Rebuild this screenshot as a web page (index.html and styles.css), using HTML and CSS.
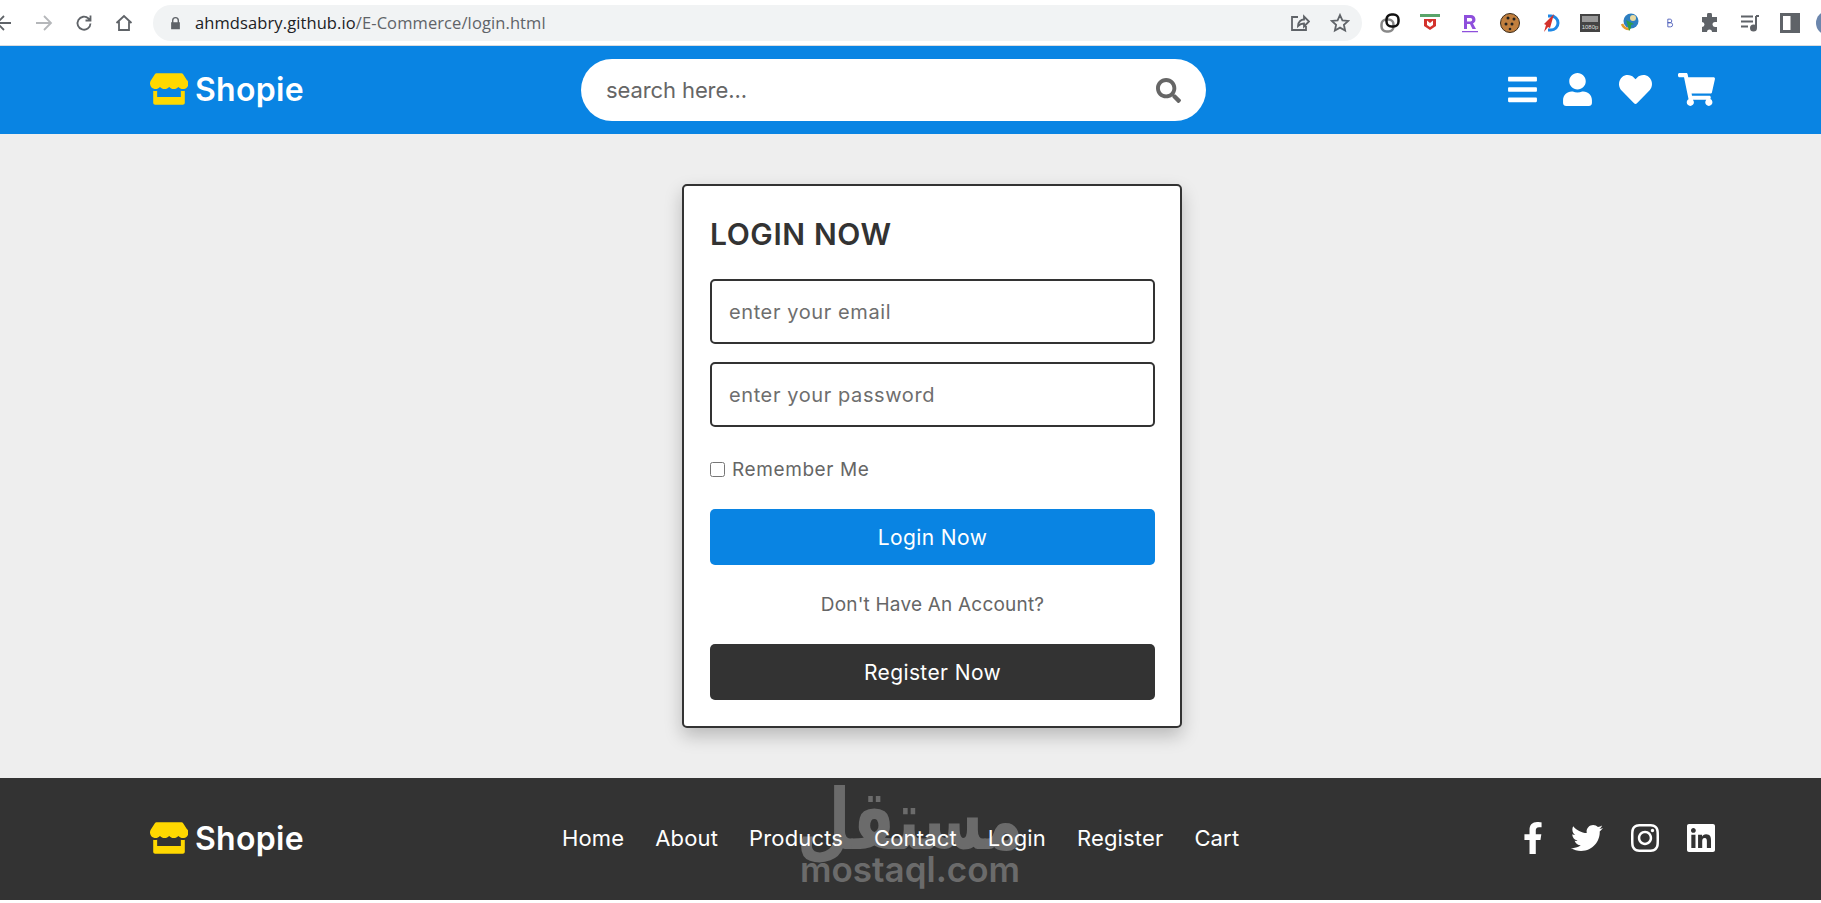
FILE: index.html
```html
<!DOCTYPE html>
<html lang="en">
<head>
  <meta charset="UTF-8">
  <meta name="viewport" content="width=device-width, initial-scale=1.0">
  <title>Login - Shopie</title>
  <link rel="stylesheet" href="styles.css">
</head>
<body>
  <svg class="defs" width="0" height="0" aria-hidden="true">
    <symbol id="store" viewBox="0 0 616 512"><path d="M602 118.6L537.1 15C531.3 5.7 521 0 510 0H106C95 0 84.7 5.7 78.9 15L14 118.6c-33.9 54.1-3.9 129.3 59.4 137.9 4.6.6 9.2.9 13.7.9 29.9 0 56.4-13.1 74.6-33.4 18.2 20.3 44.8 33.4 74.6 33.4 29.9 0 56.4-13.1 74.6-33.4 18.2 20.3 44.8 33.4 74.6 33.4 29.9 0 56.4-13.1 74.6-33.4 18.3 20.3 44.8 33.4 74.6 33.4 4.6 0 9.1-.3 13.7-.9 63.5-8.5 93.6-83.7 59.6-137.9zM529.5 288c-10 0-19.9-1.5-29.5-3.8V384H116v-99.8c-9.6 2.2-19.5 3.8-29.5 3.8-6 0-12.1-.4-18-1.2-5.6-.8-11.1-2.1-16.4-3.6V480c0 17.7 14.3 32 32 32h448c17.7 0 32-14.3 32-32V283.2c-5.4 1.6-10.8 2.9-16.4 3.6-6.1.8-12.1 1.2-18.2 1.2z"/></symbol>
    <symbol id="search" viewBox="0 0 512 512"><path d="M505 442.7L405.3 343c-4.5-4.5-10.6-7-17-7H372c27.6-35.3 44-79.7 44-128C416 93.1 322.9 0 208 0S0 93.1 0 208s93.1 208 208 208c48.3 0 92.7-16.4 128-44v16.3c0 6.4 2.5 12.5 7 17l99.7 99.7c9.4 9.4 24.6 9.4 33.9 0l28.3-28.3c9.4-9.4 9.4-24.6.1-34zM208 336c-70.7 0-128-57.2-128-128 0-70.7 57.2-128 128-128 70.7 0 128 57.2 128 128 0 70.7-57.2 128-128 128z"/></symbol>
    <symbol id="bars" viewBox="0 0 448 512"><path d="M16 132h416c8.837 0 16-7.163 16-16V76c0-8.837-7.163-16-16-16H16C7.163 60 0 67.163 0 76v40c0 8.837 7.163 16 16 16zm0 160h416c8.837 0 16-7.163 16-16v-40c0-8.837-7.163-16-16-16H16c-8.837 0-16 7.163-16 16v40c0 8.837 7.163 16 16 16zm0 160h416c8.837 0 16-7.163 16-16v-40c0-8.837-7.163-16-16-16H16c-8.837 0-16 7.163-16 16v40c0 8.837 7.163 16 16 16z"/></symbol>
    <symbol id="user" viewBox="0 0 448 512"><path d="M224 256c70.7 0 128-57.3 128-128S294.7 0 224 0 96 57.3 96 128s57.3 128 128 128zm89.6 32h-16.7c-22.2 10.2-46.9 16-72.9 16s-50.6-5.8-72.9-16h-16.7C60.2 288 0 348.2 0 422.4V464c0 26.5 21.5 48 48 48h352c26.5 0 48-21.5 48-48v-41.6c0-74.2-60.2-134.4-134.4-134.4z"/></symbol>
    <symbol id="heart" viewBox="0 0 512 512"><path d="M462.3 62.6C407.5 15.9 326 24.3 275.7 76.2L256 96.5l-19.7-20.3C186.1 24.3 104.5 15.9 49.7 62.6c-62.8 53.6-66.1 149.8-9.9 207.9l193.5 199.8c12.5 12.9 32.8 12.9 45.3 0l193.5-199.8c56.3-58.1 53-154.3-9.8-207.9z"/></symbol>
    <symbol id="cart" viewBox="0 0 576 512"><path d="M528.12 301.319l47.273-208C578.806 78.301 567.391 64 551.99 64H159.208l-9.166-44.81C147.758 8.021 137.93 0 126.529 0H24C10.745 0 0 10.745 0 24v16c0 13.255 10.745 24 24 24h69.883l70.248 343.435C147.325 417.1 136 435.222 136 456c0 30.928 25.072 56 56 56s56-25.072 56-56c0-15.674-6.447-29.835-16.824-40h209.647C430.447 426.165 424 440.326 424 456c0 30.928 25.072 56 56 56s56-25.072 56-56c0-22.172-12.888-41.332-31.579-50.405l5.517-24.276c3.413-15.018-8.002-29.319-23.403-29.319H218.117l-6.545-32h293.145c11.206 0 20.92-7.754 23.403-18.681z"/></symbol>
    <symbol id="facebook" viewBox="0 0 320 512"><path d="M279.14 288l14.22-92.66h-88.91v-60.13c0-25.35 12.42-50.06 52.24-50.06h40.42V6.26S260.43 0 225.36 0c-73.22 0-121.08 44.38-121.08 124.72v70.62H22.89V288h81.39v224h100.17V288z"/></symbol>
    <symbol id="twitter" viewBox="0 0 512 512"><path d="M459.37 151.716c.325 4.548.325 9.097.325 13.645 0 138.72-105.583 298.558-298.558 298.558-59.452 0-114.68-17.219-161.137-47.106 8.447.974 16.568 1.299 25.34 1.299 49.055 0 94.213-16.568 130.274-44.832-46.132-.975-84.792-31.188-98.112-72.772 6.498.974 12.995 1.624 19.818 1.624 9.421 0 18.843-1.3 27.614-3.573-48.081-9.747-84.143-51.98-84.143-102.985v-1.299c13.969 7.797 30.214 12.67 47.431 13.319-28.264-18.843-46.781-51.005-46.781-87.391 0-19.492 5.197-37.36 14.294-52.954 51.655 63.675 129.3 105.258 216.365 109.807-1.624-7.797-2.599-15.918-2.599-24.04 0-57.828 46.782-104.934 104.934-104.934 30.213 0 57.502 12.67 76.67 33.137 23.715-4.548 46.456-13.32 66.599-25.34-7.798 24.366-24.366 44.833-46.132 57.827 21.117-2.273 41.584-8.122 60.426-16.243-14.292 20.791-32.161 39.308-52.628 54.253z"/></symbol>
    <symbol id="instagram" viewBox="0 0 448 512"><path d="M224.1 141c-63.6 0-114.9 51.3-114.9 114.9s51.3 114.9 114.9 114.9S339 319.5 339 255.9 287.7 141 224.1 141zm0 189.6c-41.1 0-74.7-33.5-74.7-74.7s33.5-74.7 74.7-74.7 74.7 33.5 74.7 74.7-33.6 74.7-74.7 74.7zm146.4-194.3c0 14.9-12 26.8-26.8 26.8-14.9 0-26.8-12-26.8-26.8s12-26.8 26.8-26.8 26.8 12 26.8 26.8zm76.1 27.2c-1.7-35.9-9.9-67.7-36.2-93.9-26.2-26.2-58-34.4-93.9-36.2-37-2.1-147.9-2.1-184.9 0-35.8 1.7-67.6 9.9-93.9 36.1s-34.4 58-36.2 93.9c-2.1 37-2.1 147.9 0 184.9 1.7 35.9 9.9 67.7 36.2 93.9s58 34.4 93.9 36.2c37 2.1 147.9 2.1 184.9 0 35.9-1.7 67.7-9.9 93.9-36.2 26.2-26.2 34.4-58 36.2-93.9 2.1-37 2.1-147.8 0-184.8zM398.8 388c-7.8 19.6-22.9 34.7-42.6 42.6-29.5 11.7-99.5 9-132.1 9s-102.7 2.6-132.1-9c-19.6-7.8-34.7-22.9-42.6-42.6-11.7-29.5-9-99.5-9-132.1s-2.6-102.7 9-132.1c7.8-19.6 22.9-34.7 42.6-42.6 29.5-11.7 99.5-9 132.1-9s102.7-2.6 132.1 9c19.6 7.8 34.7 22.9 42.6 42.6 11.7 29.5 9 99.5 9 132.1s2.7 102.7-9 132.1z"/></symbol>
    <symbol id="linkedin" viewBox="0 0 448 512"><path d="M416 32H31.9C14.3 32 0 46.5 0 64.3v383.4C0 465.5 14.3 480 31.9 480H416c17.6 0 32-14.5 32-32.3V64.3c0-17.8-14.4-32.3-32-32.3zM135.4 416H69V202.2h66.5V416zm-33.2-243c-21.3 0-38.5-17.3-38.5-38.5S80.9 96 102.2 96c21.2 0 38.5 17.3 38.5 38.5 0 21.3-17.2 38.5-38.5 38.5zm282.1 243h-66.4V312c0-24.8-.5-56.7-34.5-56.7-34.6 0-39.9 26.9-39.9 54.9V416h-66.4V202.2h63.7v29.2h.9c8.9-16.8 30.6-34.5 62.9-34.5 67.2 0 79.7 44.3 79.7 101.9V416z"/></symbol>
  </svg>

  <div class="toolbar">
    <div class="tool-buttons">
      <svg class="tool back" viewBox="0 0 20 20"><path d="M17 10H3M10 3l-7 7 7 7"/></svg>
      <svg class="tool forward" viewBox="0 0 20 20"><path d="M2 10h15M10 3l7 7-7 7"/></svg>
      <svg class="tool" viewBox="0 0 20 20"><path d="M16.5 10.5a6.5 6.5 0 1 1-2-5L16.5 7.5M16.5 2.5v5h-5"/></svg>
      <svg class="tool" viewBox="0 0 20 20"><path d="M2.5 10L10 3l7.5 7M5 8.5V17h10V8.5"/></svg>
    </div>
    <div class="url-pill">
      <svg class="lock" viewBox="0 0 12 16"><path d="M2 7V5a4 4 0 0 1 8 0v2h1v8H1V7zm1.6 0h4.8V5a2.4 2.4 0 0 0-4.8 0z"/></svg>
      <span class="url"><span class="url-host">ahmdsabry.github.io</span>/E-Commerce/login.html</span>
      <svg class="tool pill-icon share" viewBox="0 0 20 20"><path d="M8 4H2v13h14v-4M8 13c0-4 3-6.500 6-6.500V3.500l5 5-5 5v-3c-3 0-4.500 1-6 2.500z"/></svg>
      <svg class="tool pill-icon" viewBox="0 0 20 20"><path d="M10 2l2.400 5.300 5.800.6-4.300 3.900 1.200 5.700-5.100-2.900-5.100 2.900 1.200-5.700L1.800 7.900l5.800-.6z"/></svg>
    </div>
    <div class="extensions">
      <svg class="ext" viewBox="0 0 20 20" fill="none" stroke-width="2.500"><rect x="1.500" y="6.500" width="12" height="12" rx="5" stroke="#888"/><rect x="6.500" y="1.500" width="12" height="12" rx="5" stroke="#111"/></svg>
      <svg class="ext" viewBox="0 0 20 20"><path fill="#5aa469" d="M0 1h20v3H0z"/><path fill="#d3322c" d="M4 6h12v7l-6 4-6-4z"/><path fill="#fff" d="M7 7.500l3 2.500 3-2.500V12l-3 2-3-2z"/></svg>
      <svg class="ext" viewBox="0 0 20 20"><path fill="#8e4fdc" d="M4 2h7a4.500 4.500 0 0 1 2 8.500l3 5.500h-3.500L10 11H7v5H4zM7 5v3.500h3.500a1.700 1.700 0 0 0 0-3.500zM2 18h16v1.300H2z"/></svg>
      <svg class="ext" viewBox="0 0 20 20"><circle cx="10" cy="10" r="9.500" fill="#c17f3e" stroke="#3a2a1a"/><circle cx="8" cy="5" r="1.500" fill="#222"/><circle cx="14" cy="6" r="1.500" fill="#222"/><circle cx="6" cy="11" r="1.500" fill="#222"/><circle cx="12" cy="11" r="1.500" fill="#222"/><circle cx="10" cy="16" r="1.300" fill="#222"/></svg>
      <svg class="ext" viewBox="0 0 20 20" fill="none"><path stroke="#1e88e5" stroke-width="3" d="M8 3h3a7 7 0 0 1 0 14H8"/><path fill="#d3322c" d="M14 1L4 11l2 1-2 7 4-5 2 1z"/></svg>
      <svg class="ext" viewBox="0 0 20 20"><rect width="20" height="18" y="1" fill="#444"/><rect x="2" y="3" width="16" height="6" fill="#999"/><text x="10" y="15.500" class="ext-label">1080p</text></svg>
      <svg class="ext" viewBox="0 0 20 20"><circle cx="11" cy="8" r="7.500" fill="#2d7fc1"/><circle cx="13" cy="5" r="3" fill="#e8d9a0"/><path fill="none" stroke="#e59a2c" stroke-width="2.500" d="M2 11a8 8 0 0 0 8 5"/><path fill="#2e9e4a" d="M6 7l8 4-3 1v3l-2 3-1-5z"/></svg>
      <svg class="ext ext-small" viewBox="0 0 20 20" fill="none" stroke="#3f51b5" stroke-width="1.500"><path d="M6 3v14h5a3.500 3.500 0 0 0 0-7.500H6h4.500a3.300 3.300 0 0 0 0-6.500z"/></svg>
      <svg class="ext" viewBox="0 0 20 20"><path fill="#5f6368" d="M7 2a2.500 2.500 0 0 1 5 0v2h5v5h-2a2.500 2.500 0 0 0 0 5h2v5h-5a2.500 2.500 0 0 0-5 0H2v-5a2.500 2.500 0 0 0 0-5V4h5z"/></svg>
      <svg class="ext" viewBox="0 0 20 20" fill="none" stroke="#5f6368" stroke-width="2"><path d="M1 3.500h12M1 8.500h12M1 13.500h7M16 3v12"/><circle cx="13.500" cy="15" r="2.500" fill="#5f6368"/><path d="M16 3h3"/></svg>
      <svg class="ext" viewBox="0 0 20 20" fill="none" stroke="#5f6368" stroke-width="3"><path d="M1.500 1.500h17v17h-17zM12 2v16" /><path d="M14 2h3v16h-3z" fill="#5f6368"/></svg>
      <span class="avatar"></span>
    </div>
  </div>

  <header class="site-header">
    <a class="logo" href="#">
      <svg class="logo-icon"><use href="#store"/></svg>
      <span>Shopie</span>
    </a>
    <form class="search-box">
      <input class="search-input" type="text" placeholder="search here...">
      <svg class="search-icon"><use href="#search"/></svg>
    </form>
    <nav class="header-icons">
      <svg class="icon icon-bars"><use href="#bars"/></svg>
      <svg class="icon icon-user"><use href="#user"/></svg>
      <svg class="icon icon-heart"><use href="#heart"/></svg>
      <svg class="icon icon-cart"><use href="#cart"/></svg>
    </nav>
  </header>

  <main class="page">
    <form class="login-card">
      <h1 class="login-title">LOGIN NOW</h1>
      <input class="field" type="email" placeholder="enter your email">
      <input class="field field-second" type="password" placeholder="enter your password">
      <label class="remember"><input class="remember-box" type="checkbox"> Remember Me</label>
      <button class="btn btn-login" type="button">Login Now</button>
      <p class="account-text">Don't Have An Account?</p>
      <button class="btn btn-register" type="button">Register Now</button>
    </form>
  </main>

  <footer class="site-footer">
    <div class="watermark">
      <span class="watermark-ar">مستقل</span>
      <span class="watermark-en">mostaql.com</span>
    </div>
    <a class="logo" href="#">
      <svg class="logo-icon"><use href="#store"/></svg>
      <span>Shopie</span>
    </a>
    <nav class="footer-links">
      <a href="#">Home</a>
      <a href="#">About</a>
      <a href="#">Products</a>
      <a href="#">Contact</a>
      <a href="#">Login</a>
      <a href="#">Register</a>
      <a href="#">Cart</a>
    </nav>
    <div class="socials">
      <svg class="icon icon-facebook"><use href="#facebook"/></svg>
      <svg class="icon icon-twitter"><use href="#twitter"/></svg>
      <svg class="icon icon-instagram"><use href="#instagram"/></svg>
      <svg class="icon icon-linkedin"><use href="#linkedin"/></svg>
    </div>
  </footer>
</body>
</html>
```

FILE: styles.css
```css
* {
  box-sizing: border-box;
}
body {
  margin: 0;
  background: #fff;
  font-family: Inter, "Noto Sans", sans-serif;
  overflow: hidden;
}
a {
  color: inherit;
  text-decoration: none;
}
.defs {
  position: absolute;
}

/* browser bar */
.toolbar {
  height: 46px;
  display: flex;
  align-items: center;
  border-bottom: 1px solid #dadce0;
  background: #fff;
}
.tool-buttons {
  width: 153px;
  display: flex;
  gap: 20px;
  margin-left: -6px;
  padding-left: 0;
  flex: none;
}
.tool {
  width: 20px;
  height: 20px;
  fill: none;
  stroke: #5f6368;
  stroke-width: 1.8;
  flex: none;
}
.forward {
  stroke: #b5b7ba;
}
.url-pill {
  margin-left: 6px;
  width: 1209px;
  height: 36px;
  border-radius: 18px;
  background: #f1f3f4;
  display: flex;
  align-items: center;
  padding: 0 12px 0 17px;
  flex: none;
}
.lock {
  width: 11px;
  height: 14px;
  fill: #5f6368;
  flex: none;
}
.url {
  margin-left: 14px;
  font-family: "Open Sans", sans-serif;
  font-size: 16.500px;
  letter-spacing: .1px;
  color: #5f6368;
  flex: 1;
}
.url-host {
  color: #202124;
}
.pill-icon {
  margin-left: 20px;
}
.extensions {
  display: flex;
  align-items: center;
  gap: 20px;
  margin-left: 18px;
  flex: none;
}
.ext {
  width: 20px;
  height: 20px;
  flex: none;
}
.ext-small {
  transform: scale(.55);
}
.ext-label {
  font-family: "Liberation Sans", sans-serif;
  font-size: 6px;
  fill: #ddd;
  text-anchor: middle;
}
.avatar {
  width: 24px;
  height: 24px;
  border-radius: 50%;
  background: #6b86ad;
  margin-left: -4px;
  flex: none;
}

/* header */
.site-header {
  height: 88px;
  background: #0984e3;
  display: grid;
  grid-template-columns: 431px 625px 1fr;
  align-items: center;
  padding: 0 106px 0 150px;
}
.logo {
  display: flex;
  align-items: center;
  gap: 7px;
  padding-bottom: 2px;
  color: #fff;
  font-size: 32px;
  font-weight: 600;
  letter-spacing: .3px;
}
.logo-icon {
  width: 38px;
  height: 32px;
  fill: #ffd800;
}
.search-box {
  height: 62px;
  border-radius: 31px;
  background: #fff;
  display: flex;
  align-items: center;
  padding: 0 25px 0 23px;
}
.search-input {
  flex: 1;
  min-width: 0;
  border: none;
  outline: none;
  background: none;
  padding: 0 2px;
  font: inherit;
  font-size: 22px;
  letter-spacing: -.1px;
  color: #666;
}
.search-input::placeholder {
  color: #666;
}
.search-icon {
  width: 25px;
  height: 25px;
  fill: #666;
}
.header-icons {
  display: flex;
  justify-content: flex-end;
  align-items: center;
  gap: 26.500px;
  padding-bottom: 2px;
}
.icon {
  fill: #fff;
  display: block;
  flex: none;
}
.icon-bars {
  width: 29px;
  height: 33px;
}
.icon-user {
  width: 29px;
  height: 33px;
}
.icon-heart {
  width: 33px;
  height: 33px;
}
.icon-cart {
  width: 37px;
  height: 33px;
}

/* login */
.page {
  background: #eee;
  padding: 50px 0 50px 43px;
  display: flex;
  justify-content: center;
}
.login-card {
  width: 500px;
  height: 544px;
  background: #fff;
  border: 2px solid #333;
  border-radius: 5px;
  padding: 26px 25px 26px 26px;
  box-shadow: 0 8px 18px rgba(0, 0, 0, .22);
  display: flex;
  flex-direction: column;
}
.login-title {
  margin: 0 0 23px;
  font-size: 30px;
  line-height: 44px;
  font-weight: 600;
  letter-spacing: .6px;
  color: #333;
}
.field {
  height: 65px;
  border: 2px solid #333;
  border-radius: 5px;
  padding: 0 17px;
  font: inherit;
  font-size: 20px;
  letter-spacing: .6px;
  color: #333;
  outline: none;
  flex: none;
}
.field::placeholder {
  color: #6e6e6e;
}
.field-second {
  margin-top: 18px;
}
.remember {
  height: 28px;
  margin-top: 28px;
  display: flex;
  align-items: center;
  gap: 7px;
  font-size: 19px;
  letter-spacing: .6px;
  color: #666;
}
.remember-box {
  width: 15px;
  height: 15px;
  margin: 0;
}
.btn {
  height: 56px;
  border: none;
  border-radius: 5px;
  color: #fff;
  font: inherit;
  font-size: 21px;
  letter-spacing: .4px;
  flex: none;
}
.btn-login {
  margin-top: 26px;
  background: #0984e3;
}
.btn-register {
  background: #333;
}
.account-text {
  margin: 26px 0 25px;
  line-height: 28px;
  text-align: center;
  font-size: 19px;
  letter-spacing: .2px;
  color: #666;
}

/* footer */
.site-footer {
  position: relative;
  height: 122px;
  background: #333;
  display: grid;
  grid-template-columns: 412px 1fr auto;
  align-items: center;
  padding: 0 106px 0 150px;
}
.site-footer > .logo,
.footer-links,
.socials {
  position: relative;
  z-index: 1;
}
.footer-links {
  display: flex;
  gap: 31px;
  padding-bottom: 2px;
  color: #fff;
  font-size: 22px;
  letter-spacing: .15px;
}
.socials {
  display: flex;
  align-items: center;
  gap: 28px;
  padding-bottom: 2px;
}
.icon-facebook {
  width: 20px;
  height: 32px;
}
.icon-twitter {
  width: 32px;
  height: 32px;
}
.icon-instagram {
  width: 28px;
  height: 32px;
}
.icon-linkedin {
  width: 28px;
  height: 32px;
}
.watermark {
  position: absolute;
  left: 799px;
  top: 0;
  width: 222px;
  display: flex;
  flex-direction: column;
  align-items: center;
  color: #6b6b6b;
  font-weight: 600;
}
.watermark-ar {
  font-family: "DejaVu Sans", sans-serif;
  font-size: 62px;
  font-weight: 700;
  line-height: 86px;
  transform: scaleY(1.35);
}
.watermark-en {
  margin-top: -10px;
  font-size: 35px;
  line-height: 30px;
}
```
